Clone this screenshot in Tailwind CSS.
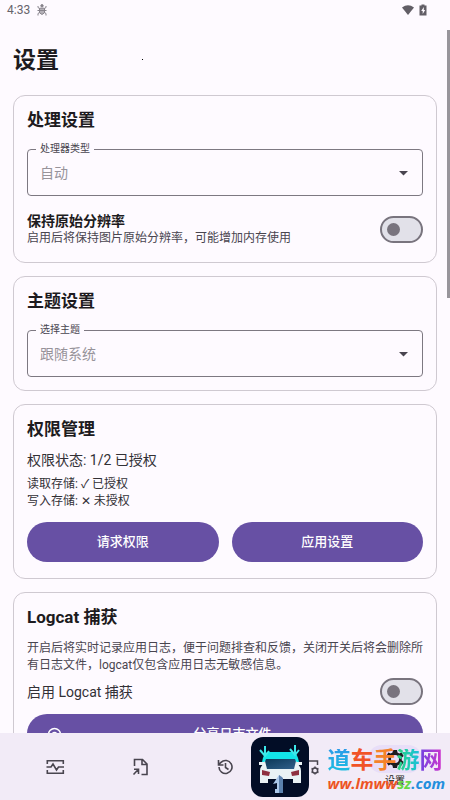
<!DOCTYPE html>
<html lang="zh-CN">
<head>
<meta charset="utf-8">
<meta name="viewport" content="width=device-width, initial-scale=1">
<title>设置</title>
<script src="https://cdn.jsdelivr.net/npm/@tailwindcss/browser@4"></script>
</head>
<body class="h-screen overflow-hidden bg-[#fefaff] text-[#1d1b20] font-['Roboto','Noto_Sans_CJK_SC',sans-serif]">
<div class="relative flex h-full flex-col">
  <header class="flex h-5 shrink-0 items-center justify-between pl-[7px] pr-[22px] text-[#67636b]">
    <div class="flex items-center gap-1.5">
      <span class="text-xs">4:33</span>
      <svg class="size-3" viewBox="0 0 12 12" fill="none" stroke="#87838b" stroke-width="1"><circle cx="6" cy="1.800" r="1.200" fill="#87838b"/><path d="M3.500 4.200h5v4.600l-2.500 1.700-2.500-1.700z" fill="#b5b1b8"/><path d="M4 6.500h4M3.500 4.500L2 3.500V2M8.500 4.500L10 3.500V2M3.500 8.500L2 9.500V11.500M8.500 8.500L10 9.500V11.500M1.500 6.500h2M8.500 6.500h2"/></svg>
    </div>
    <div class="flex items-center gap-1">
      <svg class="h-2.5 w-3" viewBox="0 0 12 10" fill="#625e66"><path d="M0 2.500Q6-2 12 2.500L6 10z"/></svg>
      <svg class="h-3 w-2.5" viewBox="0 0 10 12" fill="#625e66"><path d="M3.500.500h3v1h2v10h-7v-10h2z"/><path d="M5.800 3L3.200 7h1.500v3L7.200 6H5.800z" fill="#fefaff"/></svg>
    </div>
  </header>

  <main class="relative flex min-h-0 flex-1 flex-col gap-[13px] overflow-hidden px-[13px] pt-6">
    <h1 class="mb-1 text-[23px] leading-[34px] font-bold">设置</h1>

    <section class="shrink-0 rounded-xl border border-[#cfc9d1] px-[13px] pt-3 pb-[15px]">
      <h2 class="text-[17px] leading-6 font-bold">处理设置</h2>
      <div class="relative mt-[17px]">
        <label for="cpu" class="absolute -top-2 left-[9px] bg-[#fefaff] px-1 text-[10px] leading-4 text-[#49454f]">处理器类型</label>
        <select id="cpu" class="block h-[47px] w-full appearance-none rounded border border-[#7d7881] bg-transparent px-3 text-sm text-[#97939a]"><option>自动</option></select>
        <svg class="pointer-events-none absolute top-[22px] right-[15px] h-[5px] w-[9px]" viewBox="0 0 9 5" fill="#49454f"><path d="M0 0h9L4.500 4.500z"/></svg>
      </div>
      <div class="mt-4 flex items-center justify-between">
        <label for="keep">
          <span class="block text-sm leading-[18px] font-bold">保持原始分辨率</span>
          <span class="block text-xs leading-[17px] text-[#49454f]">启用后将保持图片原始分辨率，可能增加内存使用</span>
        </label>
        <input id="keep" type="checkbox" role="switch" class="relative h-[27px] w-[43px] shrink-0 appearance-none rounded-full border-2 border-[#79747e] bg-[#e2e1e9] before:absolute before:top-[5px] before:left-[5px] before:size-[13px] before:rounded-full before:bg-[#79747e]">
      </div>
    </section>

    <section class="shrink-0 rounded-xl border border-[#cfc9d1] px-[13px] pt-3 pb-[13px]">
      <h2 class="text-[17px] leading-6 font-bold">主题设置</h2>
      <div class="relative mt-[17px]">
        <label for="theme" class="absolute -top-2 left-[9px] bg-[#fefaff] px-1 text-[10px] leading-4 text-[#49454f]">选择主题</label>
        <select id="theme" class="block h-[47px] w-full appearance-none rounded border border-[#7d7881] bg-transparent px-3 text-sm text-[#97939a]"><option>跟随系统</option></select>
        <svg class="pointer-events-none absolute top-[22px] right-[15px] h-[5px] w-[9px]" viewBox="0 0 9 5" fill="#49454f"><path d="M0 0h9L4.500 4.500z"/></svg>
      </div>
    </section>

    <section class="shrink-0 rounded-xl border border-[#cfc9d1] px-[13px] pt-3 pb-4">
      <h2 class="text-[17px] leading-6 font-bold">权限管理</h2>
      <p class="mt-[9px] text-sm leading-5 text-[#323036]">权限状态: 1/2 已授权</p>
      <p class="mt-[6px] text-xs leading-[17px] text-[#323036]">读取存储: ✓ 已授权</p>
      <p class="text-xs leading-[17px] text-[#323036]">写入存储: ✕ 未授权</p>
      <div class="mt-3 grid grid-cols-2 gap-[13px]">
        <button class="h-10 rounded-full bg-[#6750a4] text-[13px] font-medium text-white">请求权限</button>
        <button class="h-10 rounded-full bg-[#6750a4] text-[13px] font-medium text-white">应用设置</button>
      </div>
    </section>

    <section class="shrink-0 rounded-xl border border-[#cfc9d1] px-[13px] pt-3 pb-4">
      <h2 class="text-[17px] leading-6 font-bold">Logcat 捕获</h2>
      <p class="mt-[11px] text-xs leading-[17px] text-[#49454f]">开启后将实时记录应用日志，便于问题排查和反馈，关闭开关后将会删除所有日志文件，logcat仅包含应用日志无敏感信息。</p>
      <div class="mt-1 flex items-center justify-between">
        <label for="logcat" class="text-sm text-[#323036]">启用 Logcat 捕获</label>
        <input id="logcat" type="checkbox" role="switch" class="relative h-[27px] w-[43px] shrink-0 appearance-none rounded-full border-2 border-[#79747e] bg-[#e2e1e9] before:absolute before:top-[5px] before:left-[5px] before:size-[13px] before:rounded-full before:bg-[#79747e]">
      </div>
      <button class="mt-[9px] flex h-10 w-full items-center rounded-full bg-[#6750a4] px-5 text-[13px] font-medium text-white">
        <svg class="size-[15px]" viewBox="0 0 15 15" fill="none" stroke="#fff" stroke-width="1.500"><circle cx="7.500" cy="7.500" r="6"/><circle cx="7.500" cy="7.500" r="2" fill="#fff"/></svg>
        <span class="flex-1">分享日志文件</span>
      </button>
    </section>
    <div class="absolute top-[10px] right-0 h-[268px] w-[3px] bg-[#98959b]"></div>
  </main>

  <nav class="grid h-[67px] shrink-0 grid-cols-[repeat(5,85px)] items-center justify-center bg-[#f2ebf7] text-[#49454f]">
    <a href="#monitor" aria-label="监控" class="flex justify-center"><svg class="size-5" viewBox="0 0 20 20" fill="none" stroke="currentColor" stroke-width="1.600"><path d="M2.300 7V3.800h16V7M2.300 13v3.200h16V13M1.500 10H6l2-3 3.500 6 2-3h5.500"/></svg></a>
    <a href="#export" aria-label="导出" class="flex justify-center"><svg class="size-5" viewBox="0 0 20 20" fill="none" stroke="currentColor" stroke-width="1.600"><path d="M4.500 9V2.500h8L17 7v10.500H11.500M12 2.500V7.500H17M4 12.300H8.500V17M8.500 12.300L3.500 17.500"/></svg></a>
    <a href="#history" aria-label="历史" class="flex justify-center"><svg class="size-5" viewBox="0 0 20 20" fill="none" stroke="currentColor" stroke-width="1.600"><path d="M4 10a6.500 6.500 0 1 0 2-4.700L3.500 7.800M3.500 3v5h5M10.500 6v4.500l3 2"/></svg></a>
    <a href="#config" aria-label="配置" class="flex justify-center"><svg class="size-5" viewBox="0 0 20 20" fill="none" stroke="currentColor" stroke-width="1.500"><path d="M2 16V4h15.500v4M2 16h6"/><circle cx="15" cy="13.500" r="2.600"/><path d="M15 9.500v1.500M15 16v1.500M11.500 11.500l1.300.700M17.200 14.800l1.300.700M11.500 15.500l1.300-.700M17.200 12.200l1.300-.700"/></svg></a>
    <a href="#settings" class="flex flex-col items-center text-[10px] leading-4 text-[#1d1b20]"><span class="flex h-7 w-[54px] items-center justify-center rounded-full bg-[#e8def8]"><svg class="size-5" viewBox="0 0 20 20" fill="#1d1b20" fill-rule="evenodd"><path d="M8 1h4l.5 2.500 1.800 1 2.400-.900 2 3.500-2 1.700v2.400l2 1.700-2 3.500-2.400-.900-1.800 1L12 19H8l-.5-2.500-1.800-1-2.400.900-2-3.500 2-1.700V8.800l-2-1.700 2-3.500 2.400.900 1.800-1zM10 6a4 4 0 1 0 0 8 4 4 0 0 0 0-8z"/></svg></span>设置</a>
  </nav>

  <aside class="pointer-events-none absolute right-[5px] bottom-[3px] flex items-center gap-[18px]">
    <svg class="size-[60px]" viewBox="0 0 60 60">
      <defs><linearGradient id="glass" x1="0" x2="1" y2="1"><stop stop-color="#0a3656"/><stop offset="1" stop-color="#35648f"/></linearGradient></defs>
      <rect x="1" y="0" width="58" height="60" rx="12" fill="#020d26"/>
      <path d="M18 15h25q4 0 6 10H12q2-10 6-10z" fill="#12e5e9"/>
      <path d="M16 22h29l4 11H12z" fill="url(#glass)"/>
      <path d="M15 24l-4 6q-1 1-1 4v12h8v-4h25v4h8V34q0-3-1-4l-4-6-2 8H17z" fill="#e9f2f5"/>
      <path d="M12 33l8 2-1 4-7-1zM49 33l-8 2 1 4 7-1z" fill="#8e3140"/>
      <path d="M9 25h5v3H9zM47 25h5v3h-5z" fill="#e9f2f5"/>
      <path d="M15 9v9m-5-5l5 6 4-5M45 8v9m-5-5l5 6 4-5" fill="none" stroke="#3ce8ea" stroke-width="2"/>
      <path d="M29 38l-6 9 4-1v6h-2v4h7V40z" fill="#aac7e9"/><path d="M29 38l4 3v15h-4z" fill="#5b81ad"/>
    </svg>
    <div class="pt-2 text-center font-bold">
      <div class="flex text-[23px] leading-6"><span class="bg-linear-to-b from-[#2a9be8] to-[#1bbfe0] bg-clip-text text-transparent">道</span><span class="text-[#f15327]">车</span><span class="text-[#f5822b]">手</span><span class="bg-linear-to-r from-[#2bd477] to-[#20bde0] bg-clip-text text-transparent">游</span><span class="bg-linear-to-r from-[#7040e0] to-[#d32bcc] bg-clip-text text-transparent">网</span></div>
      <div class="font-['Open_Sans'] text-[15px] leading-5 italic"><span class="text-[#ed5425]">ww.lmww</span><span class="text-[#66d844]">sz</span><span class="text-[#238fdd]">.com</span></div>
    </div>
  </aside>
  <span class="absolute top-[59px] left-[142px] size-px bg-black"></span>
</div>
</body>
</html>
